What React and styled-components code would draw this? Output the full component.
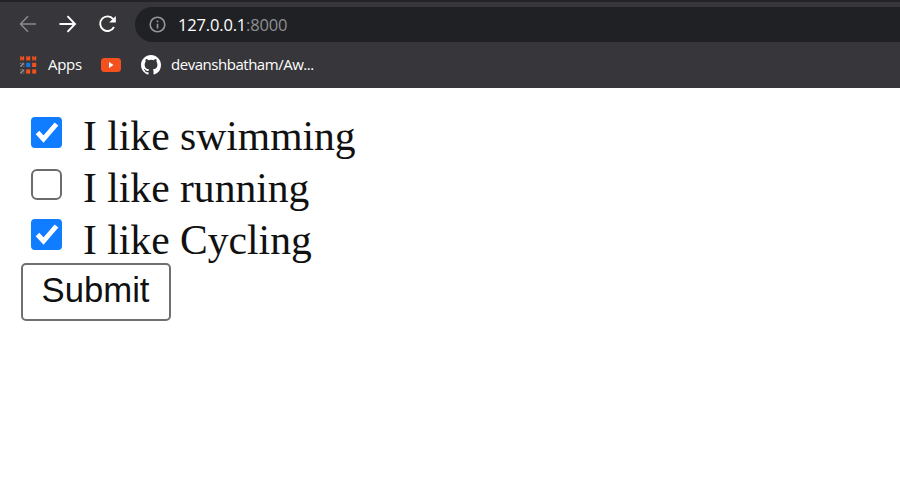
import React from 'react';
import styled, { createGlobalStyle } from 'styled-components';

const GlobalStyle = createGlobalStyle`
  * { box-sizing: border-box; }
  body { margin: 0; background: #fff; overflow: hidden; }
`;

const Page = styled.div`
  width: 100%;
  height: 483px;
  background: #fff;
`;

const BrowserChrome = styled.header`
  height: 88px;
  border-top: 2px solid #232327;
  padding-top: 5px;
  background: #37363a;
  color: #fff;
  font-family: 'Open Sans', 'Noto Sans', sans-serif;
`;

const NavBar = styled.nav`
  display: flex;
  height: 35px;
  align-items: center;
  padding-left: 18px;
`;

const NavIcon = styled.svg`
  width: 20px;
  height: 20px;
  margin: -2px 20px 0 0;
  flex: none;
  fill: none;
  stroke: ${(p) => (p.$muted ? '#8b8b8e' : '#fff')};
  stroke-width: ${(p) => (p.$muted ? 1.5 : 1.9)};
`;

const AddressBar = styled.div`
  display: flex;
  align-items: center;
  flex: 1;
  height: 35px;
  margin-left: -3px;
  padding-left: 14px;
  border-radius: 18px 0 0 18px;
  background: #202124;
`;

const InfoIcon = styled.svg`
  width: 17px;
  height: 17px;
  fill: none;
  stroke: #96979a;
  stroke-width: 1.6;
`;

const Address = styled.span`
  margin-left: 12px;
  font-size: 16.5px;
  line-height: 22px;
  letter-spacing: -0.17px;
`;

const Port = styled.span`
  color: #8e8f92;
`;

const Bookmarks = styled.div`
  display: flex;
  height: 46px;
  align-items: center;
  padding-left: 20px;
`;

const AppsIcon = styled.svg`
  width: 17px;
  height: 18px;
`;

const BookmarkLabel = styled.span`
  width: ${(p) => p.$width}px;
  margin: -2px 0 0 ${(p) => p.$gap}px;
  font-size: 15px;
  line-height: 20px;
  white-space: nowrap;
  letter-spacing: ${(p) => p.$spacing}px;
`;

const VideoIcon = styled.svg`
  width: 20px;
  height: 14px;
  margin: 0 20px 0 17px;
`;

const GithubIcon = styled.svg`
  width: 20px;
  height: 20px;
  fill: #fff;
`;

const Form = styled.form`
  padding: 23px 21px;
  color: #111;
  font-family: 'Liberation Serif', serif;
`;

const Option = styled.label`
  display: flex;
  height: 52px;
  padding-left: 10px;
  font-size: 41.6px;
  line-height: 50px;
  white-space: nowrap;
`;

const Checkbox = styled.input`
  appearance: none;
  width: 31px;
  height: 31px;
  margin: ${(p) => p.$top}px 0 0;
  border: 2px solid #6c6c6c;
  border-radius: 6px;
  background: #fff;
  &:checked {
    border: 0;
    border-radius: 4px;
    background: #107cff;
  }
`;

const CheckCell = styled.span`
  display: grid;
  width: 31px;
  margin-right: 21px;
  align-items: start;
  & > * { grid-area: 1 / 1; }
`;

const CheckMark = styled.svg`
  width: 31px;
  height: 31px;
  margin-top: ${(p) => p.$top}px;
  pointer-events: none;
  fill: none;
  stroke: #fff;
  stroke-width: 4.9;
`;

const Submit = styled.button`
  display: block;
  width: 150px;
  height: 58px;
  margin-top: -4px;
  padding: 0 1px 4px 0;
  border: 2px solid #707070;
  border-radius: 5px;
  background: #fff;
  color: #111;
  font: 34.7px/50px 'Liberation Sans', Arial, sans-serif;
`;

const options = [
  { text: 'I like swimming', checked: true, top: 6 },
  { text: 'I like running', checked: false, top: 6 },
  { text: 'I like Cycling', checked: true, top: 4 },
];

const appDots = [
  ['#f4511e', '#f4511e', '#f4511e'],
  ['#8b8b8e', '#1a73e8', '#f4511e'],
  ['#8b8b8e', '#f4511e', '#f4511e'],
];

export default function App() {
  return (
    <Page>
      <GlobalStyle />
      <BrowserChrome>
        <NavBar>
          <NavIcon $muted viewBox="0 0 20 20">
            <path d="M18 10H3M10 2.2L2.5 10l7.5 7.8" />
          </NavIcon>
          <NavIcon viewBox="0 0 20 20">
            <path d="M1.5 10H17M9.5 2.2L17 10l-7.5 7.8" />
          </NavIcon>
          <NavIcon viewBox="0 0 20 20">
            <path d="M15.2 5.1A7.3 7.3 0 1 0 16 13" />
            <path d="M17.8 2v6.5h-6.6z" fill="#fff" stroke="none" />
          </NavIcon>
          <AddressBar>
            <InfoIcon viewBox="0 0 17 17">
              <circle cx="8.5" cy="8.5" r="7.3" />
              <path d="M8.5 7.7v4.8M8.5 4.4v1.8" />
            </InfoIcon>
            <Address>127.0.0.1<Port>:8000</Port></Address>
          </AddressBar>
        </NavBar>
        <Bookmarks>
          <AppsIcon viewBox="0 0 17 18">
            {appDots.map((row, y) => row.map((color, x) => (
              <rect key={`${x}-${y}`} x={x * 6 + 0.2} y={y * 6.6 + 0.2} width="4" height="4.2" fill={color} />
            )))}
            <path d="M2.2 0v1.2M2.2 3.4v1M0 9l2-1.6M2 11l2-2M0 15.6l2-1.6M2 17.6l2-2M14.2 0v1.2M14.2 3.4v1M8.2 0v.8" stroke="#37363a" strokeWidth="1.2" />
          </AppsIcon>
          <BookmarkLabel $gap={11} $width={36} $spacing={-0.3}>Apps</BookmarkLabel>
          <VideoIcon viewBox="0 0 20 14">
            <rect width="20" height="14" rx="3.5" fill="#f4511e" />
            <path d="M8 4l4.5 3L8 10z" fill="#fff" />
          </VideoIcon>
          <GithubIcon viewBox="0 0 16 16">
            <path d="M8 0C3.58 0 0 3.58 0 8c0 3.54 2.29 6.53 5.47 7.59.4.07.55-.17.55-.38v-1.49c-2.01.37-2.53-.49-2.69-.94-.09-.23-.48-.94-.82-1.13-.28-.15-.68-.52-.01-.53.63-.01 1.08.58 1.23.82.72 1.21 1.87.87 2.33.66.07-.52.28-.87.51-1.07-1.78-.2-3.64-.89-3.64-3.95 0-.87.31-1.59.82-2.15-.08-.2-.36-1.02.08-2.12 0 0 .67-.21 2.2.82a7.6 7.6 0 0 1 4 0c1.53-1.04 2.2-.82 2.2-.82.44 1.1.16 1.92.08 2.12.51.56.82 1.27.82 2.15 0 3.07-1.87 3.75-3.65 3.95.29.25.54.73.54 1.48v2.2c0 .21.15.46.55.38A8 8 0 0 0 16 8c0-4.42-3.58-8-8-8z" />
          </GithubIcon>
          <BookmarkLabel $gap={10} $width={150} $spacing={-0.47}>devanshbatham/Aw...</BookmarkLabel>
        </Bookmarks>
      </BrowserChrome>
      <Form onSubmit={(e) => e.preventDefault()}>
        {options.map(({ text, checked, top }) => (
          <Option key={text}>
            <CheckCell>
              <Checkbox type="checkbox" defaultChecked={checked} $top={top} />
              {checked && (
                <CheckMark $top={top} viewBox="0 0 31 31">
                  <path d="M6.5 15.5l6 6.5L25.5 7" />
                </CheckMark>
              )}
            </CheckCell>
            {text}
          </Option>
        ))}
        <Submit>Submit</Submit>
      </Form>
    </Page>
  );
}
